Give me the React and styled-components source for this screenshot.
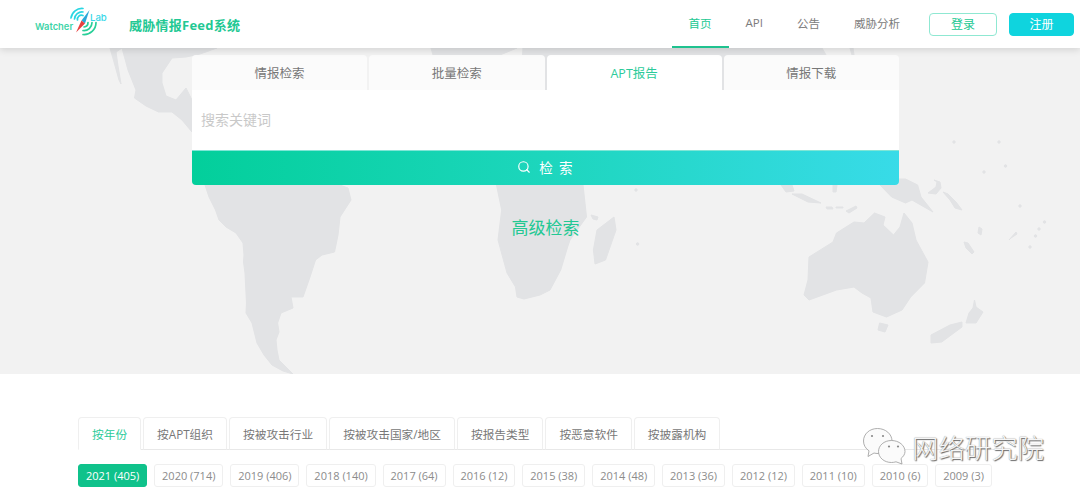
import React from "react";
import styled, { createGlobalStyle } from "styled-components";
import { Search } from "lucide-react";

const Global = createGlobalStyle`
  html, body { margin: 0; padding: 0; background: #fff; overflow: hidden; }
  body { font-family: "Open Sans", "Noto Sans CJK SC", sans-serif; }
  * { box-sizing: border-box; }
`;

const Page = styled.div`
  position: relative;
  width: 1080px;
  height: 496px;
  overflow: hidden;
  background: #fff;
`;

const Header = styled.header`
  position: relative;
  z-index: 2;
  height: 48px;
  display: flex;
  align-items: center;
  padding: 0 6px 0 33px;
  background: #fff;
  box-shadow: 0 2px 7px rgba(0, 0, 0, 0.13);
`;

const Title = styled.div`
  margin-left: 20px;
  font-size: 13px;
  letter-spacing: 0.25px;
  font-weight: 700;
  color: #22c893;
  white-space: nowrap;
`;

const Nav = styled.nav`
  margin-left: auto;
  display: flex;
  height: 48px;
`;

const NavItem = styled.a`
  display: flex;
  align-items: center;
  padding: 0 17px 1px;
  font-size: 11.5px;
  color: ${(p) => (p.$active ? "#22c893" : "#7b7b7b")};
  border-bottom: 2px solid ${(p) => (p.$active ? "#1fc28f" : "transparent")};
`;

const AuthButton = styled.button`
  height: 23px;
  width: ${(p) => (p.$solid ? "65px" : "68px")};
  margin-left: 12px;
  align-self: center;
  border-radius: 4px;
  border: 1px solid ${(p) => (p.$solid ? "#0fd4de" : "#8fe8d2")};
  background: ${(p) => (p.$solid ? "#0fd4de" : "#fff")};
  color: ${(p) => (p.$solid ? "#fff" : "#22c893")};
  font-family: inherit;
  font-size: 12px;
  padding: 0;
`;

const Hero = styled.section`
  position: relative;
  height: 326px;
  background: #f2f2f2;
  overflow: hidden;
`;

const MapArt = styled.svg`
  position: absolute;
  left: 0;
  top: 0;
  width: 1080px;
  height: 326px;
  fill: #e2e3e5;
  stroke: #e2e3e5;
  stroke-width: 1;
  stroke-linejoin: round;
`;

const SearchCard = styled.div`
  position: relative;
  width: 707px;
  margin: 7px 0 0 192px;
`;

const SearchTabs = styled.div`
  display: grid;
  grid-template-columns: repeat(4, 1fr);
  column-gap: 2px;
  height: 35px;
`;

const SearchTab = styled.div`
  display: flex;
  align-items: center;
  justify-content: center;
  font-size: 12.5px;
  border-radius: 4px 4px 0 0;
  background: ${(p) => (p.$active ? "#fff" : "#fbfbfb")};
  color: ${(p) => (p.$active ? "#2ccb9a" : "#777")};
`;

const SearchInput = styled.div`
  height: 60px;
  padding: 0 9px 2px;
  display: flex;
  align-items: center;
  background: #fff;
  font-size: 14px;
  color: #c9c9c9;
`;

const SearchButton = styled.button`
  width: 100%;
  height: 35px;
  display: flex;
  align-items: center;
  justify-content: center;
  gap: 8px;
  border: 0;
  padding: 0 0 2px;
  border-radius: 0 0 4px 4px;
  border-top: 1px solid #7fe6d6;
  background: linear-gradient(90deg, #03cf9b 0%, #1dd6bd 50%, #38dbe8 100%);
  color: #fff;
  font-family: inherit;
  font-size: 13.5px;
  letter-spacing: 1.3px;
`;

const Advanced = styled.div`
  position: relative;
  margin-top: 29px;
  margin-left: 192px;
  width: 707px;
  text-align: center;
  font-size: 17px;
  color: #22c893;
`;

const Lower = styled.section`
  padding: 43px 78px 0;
`;

const FilterTabs = styled.div`
  display: flex;
  gap: 2px;
  height: 33px;
  border-bottom: 1px solid #e8e8e8;
`;

const FilterTab = styled.div`
  height: 33px;
  padding: 0 13px;
  display: flex;
  align-items: center;
  font-size: 11.7px;
  border: 1px solid #efefef;
  border-bottom-color: ${(p) => (p.$active ? "#fff" : "#e8e8e8")};
  border-radius: 4px 4px 0 0;
  background: #fff;
  color: ${(p) => (p.$active ? "#2ccb9a" : "#777")};
  white-space: nowrap;
`;

const Years = styled.div`
  display: flex;
  gap: 7px;
  margin-top: 14px;
`;

const YearChip = styled.div`
  height: 23px;
  padding: 0 6.9px;
  display: flex;
  align-items: center;
  font-size: 11px;
  border-radius: 3px;
  border: 1px solid ${(p) => (p.$active ? "#0fc28b" : "#efefef")};
  background: ${(p) => (p.$active ? "#0fc28b" : "#fff")};
  color: ${(p) => (p.$active ? "#fff" : "#8c8c8c")};
  white-space: nowrap;
`;

const Watermark = styled.div`
  position: absolute;
  left: 861px;
  top: 426px;
  display: flex;
  align-items: center;
  gap: 5px;
  height: 40px;
`;

const WatermarkText = styled.span`
  font-size: 26.4px;
  font-weight: 300;
  color: #f6f6f6;
  text-shadow: 1px 1px 1px #666, 0 0 1px #888;
  white-space: nowrap;
`;

const searchTabs = ["情报检索", "批量检索", "APT报告", "情报下载"];
const filterTabs = ["按年份", "按APT组织", "按被攻击行业", "按被攻击国家/地区", "按报告类型", "按恶意软件", "按披露机构"];
const years = ["2021 (405)", "2020 (714)", "2019 (406)", "2018 (140)", "2017 (64)", "2016 (12)", "2015 (38)", "2014 (48)", "2013 (36)", "2012 (12)", "2011 (10)", "2010 (6)", "2009 (3)"];
const navItems = ["首页", "API", "公告", "威胁分析"];

const land = [
  "M110 48 L114 62 L119 80 L121 84 L118 66 L116 52 L122 48 L128 70 L136 90 L134.5 98 L146 106 L158.6 112 L172 112 L182 120 L192 132 L200 132 L192 100 L186 88 L176 100 L166 96 L162 83 L162 73 L172 58 L186 57 L200 54 L217 48 Z",
  "M205 185 L209 197 L215.5 210 L219 220 L226 227 L236 233 L243 243 L244 255 L243.5 262 L245 273 L246.5 303 L246 313 L252 323 L255 335 L257 343 L264 355 L272 365 L283 371 L293 374 L279 360 L277 350 L276 340 L279 332 L277.6 323 L281 313 L293 308 L291 297 L303 297 L310 277 L315.5 260 L322 255 L334.5 252 L338 235 L340 217 L351 200 L348 188 L340 185 Z",
  "M431 48 L433 55 L500 55 L517 48 Z M523 48 L822 48 L826 55 L790 92 L520 92 Z M850 48 L852 55 L854 55 L853 48 Z",
  "M496.5 185 L501.7 210 L498 240 L507 273 L515.5 287 L517 297 L524 299 L540 295 L550 290 L560.7 270 L567.6 247 L570 240 L586.5 217 L583 185 Z",
  "M614 217 L616 230 L605.5 260 L595 264 L593.4 250 L597 230 Z",
  "M591 215 L598 217 L597 220 L593 219 Z",
  "M809 257 L833 242 L836.5 233 L854 222 L864 223 L874.5 213 L885 217 L883 225 L893.5 235 L900 227 L904 213 L912 223 L916 240 L928 262 L924.5 283 L910.7 297 L902 310 L886.5 317 L873 312 L871 298 L862 293 L854 287 L836.5 290 L809 300 L804 295 L808 280 Z",
  "M879.6 323 L888 325 L885 332 L878 330 Z",
  "M974.5 300 L976 307 L983 312 L976 323 L966 323 L969 313 L973 308 Z",
  "M962 322 L962 327 L941.7 342 L931 343 L931 335 L950 325 Z",
  "M880 185 L891.7 197 L905.5 203 L912 200 L933 212 L921 197 L917.6 185 L905.5 179 L899 179 L899 185 Z",
  "M781 185 L792 185 L794 191 L786 192 Z M792 194 L802 194 L821 203 L808 202 Z",
  "M826 207 L832 207 L833 209 L827 209 Z M836 207 L843 207 L843 208 L836 208 Z M846 211 L856 206 L857 208 L849 213 Z M833 185 L837 185 L836 192 L833 192 Z",
  "M928 193 L936 187 L937 182 L934 180 L940 182 L941 188 L936 194 Z",
  "M943 192 L948 194 L956 202 L962 210 L955 208 L950 200 Z",
  "M979 227 L982 229 L981 235 L978 233 Z",
  "M964 242 L968 243 L974 252 L972 254 L966 248 Z",
  "M1009 240 L1016 232 L1017 234 L1011 238 Z",
];
const dots = [[636, 190], [637.6, 244], [954, 142], [999, 142], [1005.5, 166], [984, 172], [1020, 206], [1044.5, 222], [1039, 229], [1035.5, 236], [1030, 247]];

const WorldMap = () => (
  <MapArt viewBox="0 48 1080 326">
    {land.map((d) => <path key={d} d={d} />)}
    {dots.map(([x, y]) => <circle key={x} cx={x} cy={y} r="1.2" />)}
  </MapArt>
);

const Logo = () => (
  <svg width="76" height="34" viewBox="33 7 76 34">
    <g fill="none" strokeLinecap="round" strokeWidth="1.7" stroke="#29d6e2">
      <path d="M71 18 A11 11 0 0 1 83 8.5" />
      <path d="M74.5 19 A7.5 7.5 0 0 1 83 12" />
      <path d="M77.5 20 A4 4 0 0 1 83 15.5" />
    </g>
    <g fill="none" strokeLinecap="round" strokeWidth="1.7" stroke="#28cf98">
      <path d="M83 34.5 A12 12 0 0 0 96 22.5" />
      <path d="M83 30.5 A8 8 0 0 0 92 22.5" />
      <path d="M84 27 A4.5 4.5 0 0 0 88 22.5" />
    </g>
    <path d="M89.5 10 L85 23.5 L81.5 20.5 Z" fill="#2aa7d8" />
    <path d="M76 32.5 L81.5 20.5 L85 23.5 Z" fill="#e8403f" />
    <text x="35" y="30" fontFamily="Inter, sans-serif" fontSize="9.4" fontWeight="600" fill="#3fd4a8" stroke="none">Watcher</text>
    <text x="90" y="21" fontFamily="Inter, sans-serif" fontSize="9.6" fontWeight="500" fill="#38d7e8" stroke="none">Lab</text>
  </svg>
);

const WeChat = () => (
  <svg width="46" height="40" viewBox="861 426 46 40">
    <g fill="#fbfbfb" stroke="#9a9a9a" strokeWidth="0.8">
      <path d="M877.5 428.5 C869.5 428.5 863.5 434 863.5 441 C863.5 445 865.5 448.5 869 450.8 L868 456.5 L874 453 C875.5 453.4 876.5 453.5 878 453.5 C886 453.5 892 448 892 441 C892 434 885.5 428.5 877.5 428.5 Z" />
      <path d="M891.5 440.5 C884 440.5 878.5 445.5 878.5 451.5 C878.5 457.5 884 462.5 891.5 462.5 C893 462.5 894.5 462.2 896 461.8 L902 464 L901 458.5 C903.5 456.5 905 454 905 451.5 C905 445.5 899 440.5 891.5 440.5 Z" />
    </g>
    <g fill="#8a8a8a">
      <circle cx="872" cy="436" r="1.1" />
      <circle cx="883" cy="436" r="1.1" />
      <circle cx="889" cy="446.5" r="1.1" />
      <circle cx="898" cy="446.5" r="1.1" />
    </g>
  </svg>
);

export default function App() {
  return (
    <Page>
      <Global />
      <Header>
        <Logo />
        <Title>威胁情报Feed系统</Title>
        <Nav>
          {navItems.map((n, i) => <NavItem key={n} $active={i === 0}>{n}</NavItem>)}
        </Nav>
        <AuthButton>登录</AuthButton>
        <AuthButton $solid>注册</AuthButton>
      </Header>
      <Hero>
        <WorldMap />
        <SearchCard>
          <SearchTabs>
            {searchTabs.map((t, i) => <SearchTab key={t} $active={i === 2}>{t}</SearchTab>)}
          </SearchTabs>
          <SearchInput>搜索关键词</SearchInput>
          <SearchButton>
            <Search size={14} strokeWidth={2} />
            <span>检 索</span>
          </SearchButton>
        </SearchCard>
        <Advanced>高级检索</Advanced>
      </Hero>
      <Lower>
        <FilterTabs>
          {filterTabs.map((t, i) => <FilterTab key={t} $active={i === 0}>{t}</FilterTab>)}
        </FilterTabs>
        <Years>
          {years.map((y, i) => <YearChip key={y} $active={i === 0}>{y}</YearChip>)}
        </Years>
      </Lower>
      <Watermark>
        <WeChat />
        <WatermarkText>网络研究院</WatermarkText>
      </Watermark>
    </Page>
  );
}
